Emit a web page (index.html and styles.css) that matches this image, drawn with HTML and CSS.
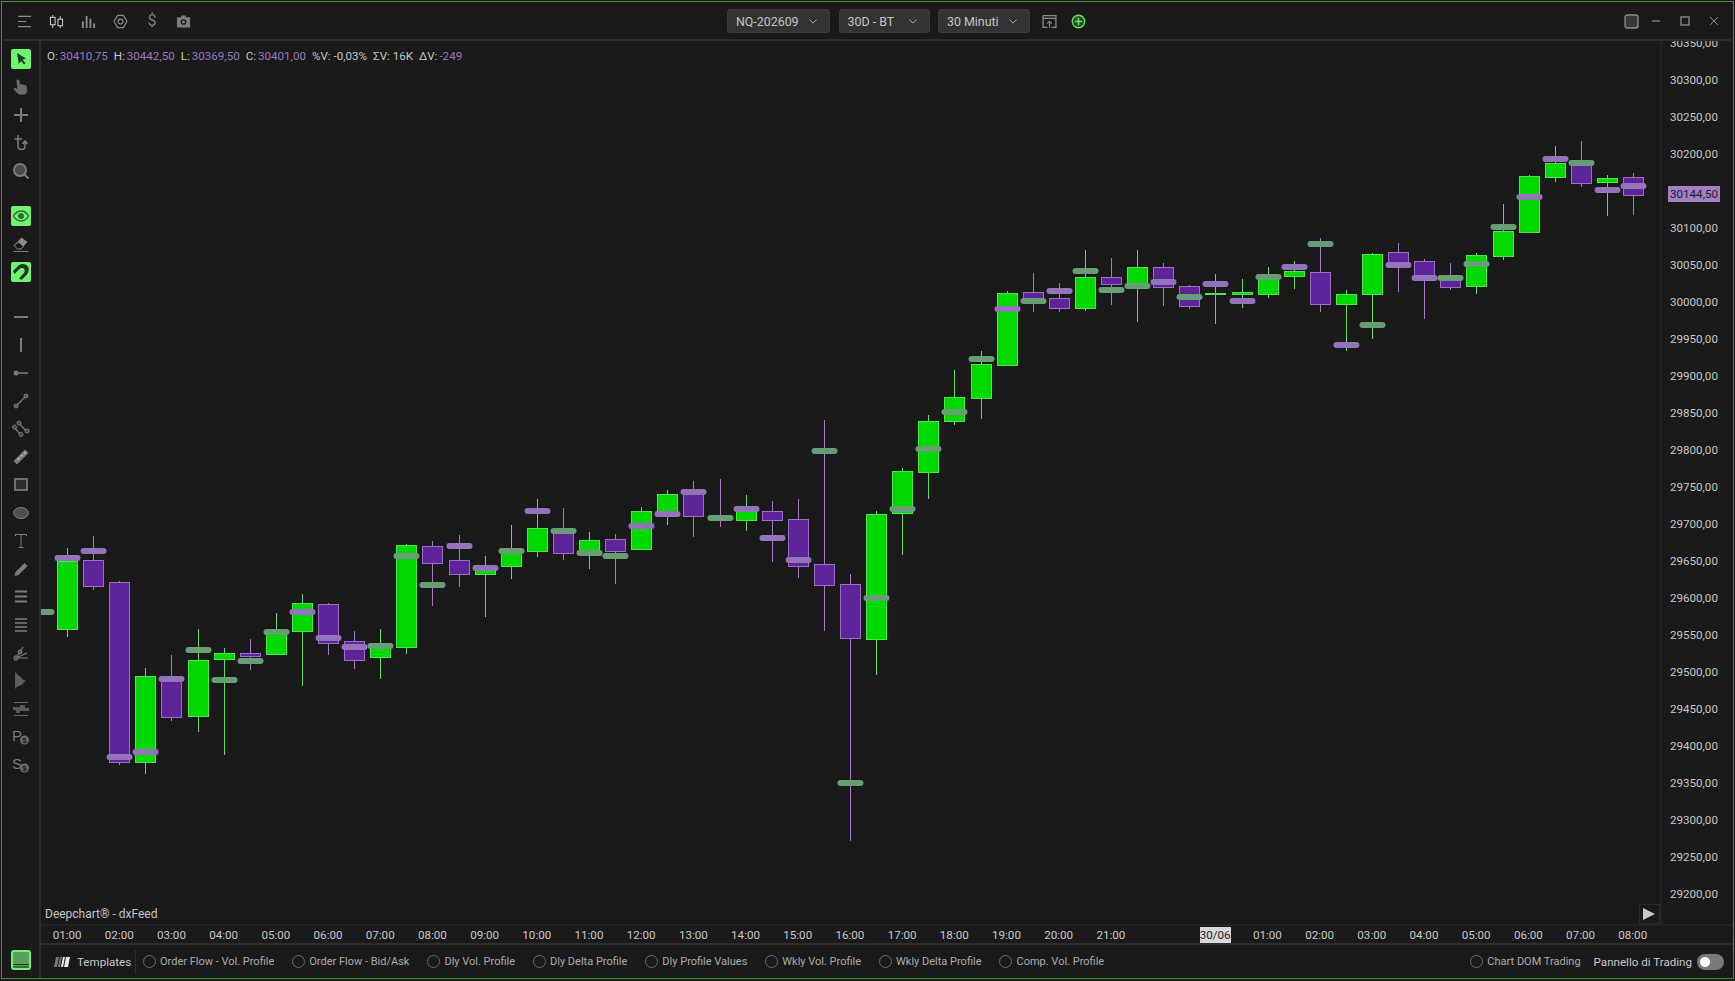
FILE: index.html
```html
<!DOCTYPE html>
<html lang="en">
<head>
    <meta charset="UTF-8">
    <title>Deepchart</title>
    <link rel="stylesheet" href="styles.css">
</head>
<body>
    <div class="window">
        <!-- Top bar -->
        <div class="topbar">
            <div class="top-icons">
                <svg class="top-icon" viewBox="0 0 16 16"><path d="M1 2.500h14M1 8h9M1 13.500h14" stroke="#8a8a8a" stroke-width="1.200" fill="none"/></svg>
                <svg class="top-icon" viewBox="0 0 16 16"><path d="M4 1v14M12 2v13" stroke="#ddd" stroke-width="1"/><rect x="1.500" y="3.500" width="5" height="8" fill="#1a1a1a" stroke="#ddd"/><rect x="9.500" y="5.500" width="5" height="7" fill="#1a1a1a" stroke="#ddd"/></svg>
                <svg class="top-icon" viewBox="0 0 16 16"><path d="M2 15V8M6 15V2M10 15V5M14 15V10" stroke="#8a8a8a" stroke-width="2" fill="none"/></svg>
                <svg class="top-icon" viewBox="0 0 16 16"><path d="M5 1.500h6L15 8l-4 6.500H5L1 8z" fill="none" stroke="#8a8a8a" stroke-width="1.200" stroke-linejoin="round"/><circle cx="8" cy="8" r="2.600" fill="none" stroke="#8a8a8a" stroke-width="1.200"/></svg>
                <span class="top-dollar">$</span>
                <svg class="top-icon" viewBox="0 0 16 16"><path d="M1 3.500h4L6 1.500h4l1 2h4v11H1z" fill="#7c7c7c"/><circle cx="8" cy="8.500" r="3" fill="#1a1a1a"/><circle cx="8" cy="8.500" r="1.600" fill="#7c7c7c"/></svg>
            </div>

            <div class="top-center">
                <div class="select select-symbol">NQ-202609 <svg viewBox="0 0 12 8"><path d="M1.500 1.500L6 6l4.500-4.500" fill="none" stroke="#b5b5b5" stroke-width="1.100"/></svg></div>
                <div class="select select-range">30D - BT <svg viewBox="0 0 12 8"><path d="M1.500 1.500L6 6l4.500-4.500" fill="none" stroke="#b5b5b5" stroke-width="1.100"/></svg></div>
                <div class="select select-period">30 Minuti <svg viewBox="0 0 12 8"><path d="M1.500 1.500L6 6l4.500-4.500" fill="none" stroke="#b5b5b5" stroke-width="1.100"/></svg></div>
                <svg class="top-icon layout-icon" viewBox="0 0 14 14"><path d="M1 1.500h12v11H9M5 12.500H1v-11M1 4h12" fill="none" stroke="#8a8a8a" stroke-width="1.200"/><path d="M7 13V7M4.800 9L7 6.800 9.200 9" fill="none" stroke="#8a8a8a"/></svg>
                <svg class="top-icon plus-icon" viewBox="0 0 14 14"><circle cx="7" cy="7" r="5.800" fill="#2c4a2c" stroke="#62e062" stroke-width="1.300"/><path d="M7 3.600v6.800M3.600 7h6.800" stroke="#62e062" stroke-width="1.400"/></svg>
            </div>

            <div class="top-right">
                <svg class="win-theme" viewBox="0 0 15 15"><rect x="1" y="1" width="13" height="13" rx="2.500" fill="#383838" stroke="#8a8a8a" stroke-width="1.400"/></svg>
                <svg class="win-btn" viewBox="0 0 10 10"><path d="M1 5h8" stroke="#8a8a8a" stroke-width="1.200"/></svg>
                <svg class="win-btn" viewBox="0 0 10 10"><rect x="1" y="1" width="8" height="8" fill="none" stroke="#9a9a9a" stroke-width="1.200"/></svg>
                <svg class="win-btn" viewBox="0 0 10 10"><path d="M1 1l8 8M9 1l-8 8" stroke="#8a8a8a" stroke-width="1"/></svg>
            </div>
        </div>

        <div class="main">
            <!-- Drawing tools -->
            <div class="toolbox">
                <div class="tool on"><svg viewBox="0 0 20 20"><path d="M6 4l9 5.500-3.500 1.300 3 3.500-1.500 1.300-3-3.500-2.200 3z" fill="#1e3a1e"/></svg></div>
                <div class="tool"><svg viewBox="0 0 20 20"><path d="M7 2.500c1 0 1.500.8 1.500 1.500l.5 3 5 1c1.500.5 2 1.500 2 3v3c0 2-1.500 3.500-3.500 3.500H9c-1.500 0-2.500-1-3.500-2L3 12.500c-.8-1 .5-2.300 1.500-1.500L6.500 12 5.500 4c0-1 .5-1.500 1.500-1.500z" fill="#6a6a6a"/></svg></div>
                <div class="tool"><svg viewBox="0 0 20 20"><path d="M10 3v14M3 10h14" stroke="#7c7c7c" stroke-width="2"/></svg></div>
                <div class="tool"><svg viewBox="0 0 20 20"><path d="M7 2v11c0 2 1.500 3.500 3.500 3.500S14 15 14 13V9M3.500 6H11M11.500 11L14 8l2.500 3" fill="none" stroke="#7c7c7c" stroke-width="1.500"/></svg></div>
                <div class="tool"><svg viewBox="0 0 20 20"><circle cx="9" cy="9" r="6" fill="#4a4a4a" stroke="#7c7c7c" stroke-width="2"/><path d="M13.500 13.500l4 4" stroke="#7c7c7c" stroke-width="2"/></svg></div>

                <div class="tool on tool-group"><svg viewBox="0 0 20 20"><path d="M2.500 10c2-3.500 4.500-5 7.500-5s5.500 1.500 7.500 5c-2 3.500-4.500 5-7.500 5s-5.500-1.500-7.500-5z" fill="none" stroke="#2e6e34" stroke-width="1.500"/><circle cx="10" cy="10" r="3" fill="#2e6e34"/></svg></div>
                <div class="tool"><svg viewBox="0 0 20 20"><path d="M3 11.500L10.500 3.500l6 4.500-6.500 7H6.500z" fill="#8a8a8a"/><path d="M3 11.500L6.500 15H10l2.500-2.700-5-4.300z" fill="#1a1a1a" stroke="#8a8a8a"/><path d="M2.500 17.500h15" stroke="#7c7c7c"/></svg></div>
                <div class="tool on"><svg viewBox="0 0 20 20"><path d="M3.500 12L8 7.500c2-2 4-1.800 5-.8s1.200 3-.8 5L8 16.500l2.500 1.500 5-5c3-3 3-7 .8-9.200S10 1 7 4L2 9z" fill="#1e3a1e"/></svg></div>

                <div class="tool tool-group"><svg viewBox="0 0 20 20"><rect x="3" y="9" width="14" height="2" fill="#7c7c7c"/></svg></div>
                <div class="tool"><svg viewBox="0 0 20 20"><rect x="9" y="3" width="2" height="14" fill="#7c7c7c"/></svg></div>
                <div class="tool"><svg viewBox="0 0 20 20"><circle cx="5" cy="10" r="2.500" fill="#7c7c7c"/><path d="M5 10h12" stroke="#7c7c7c" stroke-width="1.500"/></svg></div>
                <div class="tool"><svg viewBox="0 0 20 20"><path d="M5 15L15 5" stroke="#7c7c7c" stroke-width="1.200"/><circle cx="5" cy="15" r="2" fill="#555" stroke="#7c7c7c"/><circle cx="15" cy="5" r="2" fill="#555" stroke="#7c7c7c"/></svg></div>
                <div class="tool"><svg viewBox="0 0 20 20"><path d="M3 8l6 7M8 4l8 9" stroke="#7c7c7c" stroke-width="1.200"/><circle cx="3.500" cy="8" r="2" fill="#444" stroke="#7c7c7c"/><circle cx="8" cy="4" r="2" fill="#444" stroke="#7c7c7c"/><circle cx="10" cy="15.500" r="2" fill="#444" stroke="#7c7c7c"/><circle cx="16" cy="12" r="2" fill="#444" stroke="#7c7c7c"/></svg></div>
                <div class="tool"><svg viewBox="0 0 20 20"><path d="M2.500 14L14 2.500 17.500 6 6 17.500z" fill="#7c7c7c"/><path d="M7 12.500l1.500-1.500M10 9.500L11.500 8M13 6.500l1.500-1.500" stroke="#c0c0c0" stroke-width="1.500"/></svg></div>
                <div class="tool"><svg viewBox="0 0 20 20"><rect x="4" y="4" width="12" height="11" fill="#2c2c2c" stroke="#6e6e6e" stroke-width="2"/></svg></div>
                <div class="tool"><svg viewBox="0 0 20 20"><ellipse cx="10" cy="10" rx="7.500" ry="5.500" fill="#505050" stroke="#7c7c7c"/></svg></div>
                <div class="tool"><svg viewBox="0 0 20 20"><path d="M4 3.500h12M10 3.500v13M7.500 16.500h5M4.500 3v2M15.500 3v2" stroke="#7c7c7c" stroke-width="1" fill="none"/></svg></div>
                <div class="tool"><svg viewBox="0 0 20 20"><path d="M3.500 17l1-4L13.500 4l3 3-9 9z" fill="#7c7c7c"/></svg></div>
                <div class="tool"><svg viewBox="0 0 20 20"><path d="M4 4.500h12M4 9.500h12M4 14.500h12" stroke="#7c7c7c" stroke-width="2"/></svg></div>
                <div class="tool"><svg viewBox="0 0 20 20"><path d="M4 4h12M4 8h12M4 12h12M4 16h12" stroke="#7c7c7c" stroke-width="1.500"/></svg></div>
                <div class="tool"><svg viewBox="0 0 20 20"><path d="M5 15L12 4M5 15l11-5M5 15h12" stroke="#7c7c7c" stroke-width="1.200" fill="none"/><circle cx="5" cy="15" r="2.200" fill="#555" stroke="#7c7c7c"/><circle cx="9" cy="9" r="2" fill="#555" stroke="#7c7c7c"/></svg></div>
                <div class="tool"><svg viewBox="0 0 20 20"><path d="M4 1l2 2 2 2 2 1 1 2 2 1 2 1-2 1-1 2-2 1-2 1-2 1-2 2z" fill="#5e5e5e"/></svg></div>
                <div class="tool"><svg viewBox="0 0 20 20"><path d="M3 3.500h14M3 16.500h14" stroke="#666"/><path d="M2 8h7V6h5v3h4v3H9v2H5v-3H2z" fill="#5a5a5a"/></svg></div>
                <div class="tool"><svg viewBox="0 0 20 20"><text x="1" y="14" class="tool-letter">P</text><circle cx="13.500" cy="13" r="4.500" fill="#6a6a6a"/><text x="13.500" y="16" class="tool-coin">$</text></svg></div>
                <div class="tool"><svg viewBox="0 0 20 20"><text x="1" y="14" class="tool-letter">S</text><circle cx="13.500" cy="13" r="4.500" fill="#6a6a6a"/><text x="13.500" y="16" class="tool-coin">$</text></svg></div>

                <div class="tool-screen"><svg viewBox="0 0 20 20"><rect x="1" y="1" width="18" height="18" rx="2" fill="#5aa05c" stroke="#6ff56f" stroke-width="2"/><path d="M2 14.500h16M2 17h16" stroke="#1e3a1e"/></svg></div>
            </div>

            <div class="content">
                <div class="chart-row">
                    <div class="chart" id="chart">
                        <svg id="candles"></svg>
                        <div class="legend">
                            <span>O:<b>30410,75</b></span>
                            <span>H:<b>30442,50</b></span>
                            <span>L:<b>30369,50</b></span>
                            <span>C:<b>30401,00</b></span>
                            <span>%V: -0,03%</span>
                            <span>&Sigma;V: 16K</span>
                            <span>&Delta;V:<b>-249</b></span>
                        </div>
                        <div class="chart-name">Deepchart&reg; - dxFeed</div>
                        <div class="play"><svg viewBox="0 0 12 12"><path d="M0 0l12 6-12 6z" fill="#c8c8c8"/></svg></div>
                    </div>
                    <div class="price-axis">
                        <div class="price-list" id="prices"></div>
                        <div class="last-price">30144,50</div>
                    </div>
                </div>

                <div class="time-axis" id="times"></div>

                <!-- Templates bar -->
                <div class="bottombar">
                    <svg class="tmpl-icon" viewBox="0 0 18 12"><path d="M3 1h3L4 11H1zM7 1h2L7 11H5z" fill="#777"/><path d="M10 1h2l-2 10H8zM13 1h4l-2 10h-4z" fill="#e8e8e8"/></svg>
                    <span class="tmpl-label">Templates</span>
                    <div class="radio-list">
                        <label class="radio"><i></i>Order Flow - Vol. Profile</label>
                        <label class="radio"><i></i>Order Flow - Bid/Ask</label>
                        <label class="radio"><i></i>Dly Vol. Profile</label>
                        <label class="radio"><i></i>Dly Delta Profile</label>
                        <label class="radio"><i></i>Dly Profile Values</label>
                        <label class="radio"><i></i>Wkly Vol. Profile</label>
                        <label class="radio"><i></i>Wkly Delta Profile</label>
                        <label class="radio"><i></i>Comp. Vol. Profile</label>
                    </div>
                    <div class="bottom-right">
                        <label class="radio"><i></i>Chart DOM Trading</label>
                        <span class="panel-label">Pannello di Trading</span>
                        <div class="toggle"></div>
                    </div>
                </div>
            </div>
        </div>
    </div>

    <script src="script.js"></script>
</body>
</html>
```

FILE: styles.css
```css
* {
    box-sizing: border-box;
}

html, body {
    margin: 0;
    height: 100%;
    overflow: hidden;
    background-color: #1a1a1a;
}

body {
    padding: 1px 1px 2px;
    font-family: Roboto, "Open Sans", Arial, sans-serif;
    font-size: 11.6px;
    color: #c8c8c8;
}

.window {
    height: 100%;
    display: flex;
    flex-direction: column;
    border: 1px solid #4b8a3c;
    background-color: #1a1a1a;
}

/* Top bar */
.topbar {
    height: 39px;
    flex: none;
    display: flex;
    align-items: center;
    margin: 0 2px;
    padding-top: 1px;
    border-bottom: 2px solid #2d2d2d;
}

.top-icons {
    display: flex;
    align-items: center;
    gap: 17px;
    padding-left: 13px;
}

.top-icon {
    width: 15px;
    height: 15px;
    flex: none;
}

.top-dollar {
    width: 14px;
    text-align: center;
    font-size: 16px;
    line-height: 16px;
    color: #7c7c7c;
}

.top-center {
    display: flex;
    align-items: center;
    margin-left: 536px;
}

.select {
    height: 24px;
    display: flex;
    align-items: center;
    justify-content: space-between;
    padding: 0 11px 0 8px;
    margin-right: 8.5px;
    background-color: #333;
    border: 1px solid #3a3a3a;
    border-radius: 3px;
    font-size: 12.4px;
    color: #c4c4c4;
}

.select svg {
    width: 10px;
    height: 7px;
}

.select-symbol {
    width: 103px;
}

.select-range {
    width: 91px;
}

.select-period {
    width: 92px;
}

.layout-icon {
    margin-left: 3px;
}

.plus-icon {
    margin-left: 14px;
}

.top-right {
    display: flex;
    align-items: center;
    margin-left: auto;
    padding-right: 12px;
    gap: 19px;
}

.win-theme {
    width: 15px;
    height: 15px;
    margin-right: -7px;
}

.win-btn {
    width: 10px;
    height: 10px;
}

/* Left tools */
.main {
    flex: 1;
    display: flex;
    min-height: 0;
}

.toolbox {
    width: 39px;
    flex: none;
    display: flex;
    flex-direction: column;
    align-items: center;
    gap: 8px;
    padding: 8px 0 8px 1px;
    border-right: 2px solid #2d2d2d;
}

.tool {
    width: 20px;
    height: 20px;
    flex: none;
    border-radius: 2px;
}

.tool svg {
    display: block;
    width: 20px;
    height: 20px;
}

.tool.on {
    background-color: #70f570;
}

.tool-group {
    margin-top: 17px;
}

.tool-letter {
    font-family: "Liberation Sans", sans-serif;
    font-size: 15px;
    font-weight: 300;
    fill: #7c7c7c;
}

.tool-coin {
    font-family: "Liberation Sans", sans-serif;
    font-size: 8px;
    font-weight: bold;
    text-anchor: middle;
    fill: #1a1a1a;
}

.tool-screen {
    width: 20px;
    height: 20px;
    margin-top: auto;
}

.tool-screen svg {
    display: block;
    width: 20px;
    height: 20px;
}

/* Chart */
.content {
    flex: 1;
    min-width: 0;
    display: flex;
    flex-direction: column;
}

.chart-row {
    flex: 1;
    min-height: 0;
    display: flex;
}

.chart {
    flex: 1;
    position: relative;
    overflow: hidden;
}

#candles {
    display: block;
    width: 100%;
    height: 100%;
}

.legend {
    position: absolute;
    left: 6px;
    top: 7px;
    display: flex;
    gap: 6px;
    line-height: 16px;
    color: #c4c4c4;
}

.legend b {
    margin-left: 2px;
    font-weight: normal;
    color: #9678c0;
}

.chart-name {
    position: absolute;
    left: 4px;
    bottom: 2px;
    font-size: 12px;
    line-height: 16px;
    color: #c4c4c4;
}

.play {
    position: absolute;
    right: 0;
    bottom: 0;
    width: 21px;
    height: 20px;
    padding: 3px 3px;
    border: 1px solid #2a2a2a;
}

.play svg {
    display: block;
    width: 12px;
    height: 12px;
}

.price-axis {
    width: 73px;
    flex: none;
    position: relative;
    overflow: hidden;
    border-left: 2px solid #232323;
}

.price-list {
    margin-top: -16.5px;
    padding-left: 8px;
}

.price-row {
    height: 37px;
    line-height: 37px;
}

.last-price {
    position: absolute;
    left: 6px;
    top: 145px;
    width: 52px;
    height: 16px;
    line-height: 16px;
    text-align: center;
    background-color: #a27fc6;
    color: #1e1e1e;
}

/* Time axis */
.time-axis {
    height: 19px;
    flex: none;
    display: flex;
    align-items: center;
    padding-top: 1px;
    border-top: 2px solid #232323;
}

.tick {
    width: 52.2px;
    flex: none;
    text-align: center;
}

.tick.date span {
    display: inline-block;
    line-height: 16px;
    background-color: #d8d8d8;
    color: #222;
}

/* Bottom bar */
.bottombar {
    height: 35px;
    flex: none;
    display: flex;
    align-items: center;
    padding-left: 12px;
    padding-right: 9px;
    border-top: 2px solid #2d2d2d;
}

.tmpl-icon {
    width: 18px;
    height: 12px;
    flex: none;
}

.tmpl-label {
    width: 59px;
    height: 24px;
    margin-left: 6px;
    flex: none;
    border-right: 1px solid #2d2d2d;
    line-height: 24px;
}

.radio-list {
    display: flex;
    gap: 18px;
    padding-left: 7px;
}

.radio {
    display: flex;
    align-items: center;
    gap: 4px;
    font-size: 11px;
    color: #aaa;
}

.radio i {
    width: 13px;
    height: 13px;
    flex: none;
    border: 1px solid #6a6a6a;
    border-radius: 50%;
}

.bottom-right {
    display: flex;
    align-items: center;
    margin-left: auto;
}

.panel-label {
    margin-left: 13px;
}

.toggle {
    width: 27px;
    height: 16px;
    margin-left: 5px;
    position: relative;
    border-radius: 8px;
    background-color: #7a7a7a;
}

.toggle::after {
    content: "";
    position: absolute;
    left: 3px;
    top: 3px;
    width: 10px;
    height: 10px;
    border-radius: 50%;
    background-color: #fff;
}
```

FILE: script.js
```js
// candle values are in page pixels: dir, high, body top, body bottom, low, marker y, marker colour
var candles = [
    ["d", 612, 612, 612, 612, 612, "g"],
    ["u", 548, 561, 629, 637, 558, "p"],
    ["d", 536, 560, 586, 590, 551, "p"],
    ["d", 581, 582, 762, 765, 757, "p"],
    ["u", 668, 676, 762, 774, 752, "p"],
    ["d", 655, 678, 717, 721, 679, "p"],
    ["u", 629, 660, 716, 732, 650, "g"],
    ["u", 648, 653, 659, 755, 680, "g"],
    ["d", 639, 653, 656, 670, 661, "g"],
    ["u", 613, 632, 654, 654, 632, "g"],
    ["u", 594, 603, 631, 686, 612, "p"],
    ["d", 603, 604, 643, 655, 638, "p"],
    ["d", 631, 641, 660, 669, 647, "p"],
    ["u", 629, 645, 657, 679, 646, "g"],
    ["u", 544, 545, 647, 654, 556, "g"],
    ["d", 541, 546, 563, 606, 585, "g"],
    ["d", 535, 560, 574, 587, 546, "p"],
    ["u", 556, 568, 574, 617, 568, "p"],
    ["u", 525, 551, 566, 579, 551, "g"],
    ["u", 499, 528, 551, 557, 511, "p"],
    ["d", 508, 531, 553, 560, 531, "g"],
    ["u", 532, 540, 553, 569, 553, "g"],
    ["d", 534, 539, 551, 584, 556, "g"],
    ["u", 507, 511, 549, 549, 526, "p"],
    ["u", 490, 494, 514, 525, 514, "p"],
    ["d", 481, 492, 516, 537, 492, "p"],
    ["d", 479, 518, 518, 527, 518, "g"],
    ["u", 495, 509, 520, 531, 509, "p"],
    ["d", 501, 511, 520, 562, 538, "p"],
    ["d", 499, 519, 566, 578, 560, "p"],
    ["d", 420, 564, 585, 631, 451, "g"],
    ["d", 574, 584, 638, 841, 783, "g"],
    ["u", 511, 514, 639, 675, 598, "g"],
    ["u", 468, 471, 513, 555, 509, "g"],
    ["u", 415, 421, 472, 499, 449, "g"],
    ["u", 370, 397, 421, 425, 412, "g"],
    ["u", 351, 364, 398, 419, 359, "g"],
    ["u", 291, 293, 365, 365, 309, "p"],
    ["d", 273, 292, 303, 312, 301, "g"],
    ["d", 283, 298, 308, 312, 291, "p"],
    ["u", 250, 277, 308, 311, 271, "g"],
    ["d", 258, 277, 284, 305, 290, "g"],
    ["u", 250, 267, 283, 322, 286, "g"],
    ["d", 263, 267, 287, 306, 282, "p"],
    ["d", 285, 286, 306, 309, 297, "g"],
    ["u", 274, 293, 294, 324, 284, "p"],
    ["u", 279, 292, 294, 308, 301, "p"],
    ["u", 267, 277, 294, 298, 277, "g"],
    ["u", 261, 271, 276, 289, 267, "p"],
    ["d", 238, 272, 304, 312, 244, "g"],
    ["u", 290, 294, 304, 351, 345, "p"],
    ["u", 253, 254, 294, 339, 325, "g"],
    ["d", 243, 252, 267, 292, 265, "p"],
    ["d", 259, 261, 278, 319, 278, "p"],
    ["d", 263, 277, 287, 290, 278, "g"],
    ["u", 253, 255, 286, 294, 264, "g"],
    ["u", 204, 231, 256, 260, 227, "g"],
    ["u", 175, 176, 232, 232, 197, "p"],
    ["u", 146, 163, 177, 182, 159, "p"],
    ["d", 141, 163, 183, 187, 163, "g"],
    ["u", 175, 178, 182, 216, 190, "p"],
    ["d", 173, 177, 195, 215, 186, "p"]
];

var SVG_NS = "http://www.w3.org/2000/svg";
var STEP = 26.1;
var FIRST_X = 41.4;

var svg = document.getElementById("candles");
var box = document.getElementById("chart").getBoundingClientRect();
svg.setAttribute("viewBox", box.left + " " + box.top + " " + box.width + " " + box.height);
svg.setAttribute("shape-rendering", "crispEdges");

function addRect(x, y, w, h, fill, stroke, rx) {
    var r = document.createElementNS(SVG_NS, "rect");
    r.setAttribute("x", x);
    r.setAttribute("y", y);
    r.setAttribute("width", w);
    r.setAttribute("height", h);
    r.setAttribute("fill", fill);
    if (stroke) r.setAttribute("stroke", stroke);
    if (rx) {
        r.setAttribute("rx", rx);
        r.setAttribute("shape-rendering", "auto");
    }
    svg.appendChild(r);
}

candles.forEach(function (c, i) {
    var x = Math.floor(FIRST_X + STEP * i);
    var up = c[0] === "u";
    addRect(x, c[1], 1, c[4] - c[1], up ? "#5fdc5f" : "#a878c8");
    if (c[3] > c[2]) {
        addRect(x - 9.5, c[2] + 0.5, 20, c[3] - c[2], up ? "#00d900" : "#60249a", up ? "#4ce64c" : "#9b6dc4");
    }
});

// markers go last so they stay above neighbouring bodies
candles.forEach(function (c, i) {
    var x = Math.floor(FIRST_X + STEP * i);
    addRect(x - 12.5, c[5] - 3, 26, 6, c[6] === "p" ? "#9473bd" : "#689e74", null, 3);
});

// price axis, the 30150 row stays empty because the last price tag sits there
var prices = document.getElementById("prices");
for (var p = 30350; p >= 29200; p -= 50) {
    var row = document.createElement("div");
    row.className = "price-row";
    if (p !== 30150) row.textContent = p + ",00";
    prices.appendChild(row);
}

// time axis, one slot per hour, 22:00-00:00 has no label
var labels = ["01:00", "02:00", "03:00", "04:00", "05:00", "06:00", "07:00", "08:00", "09:00", "10:00", "11:00",
    "12:00", "13:00", "14:00", "15:00", "16:00", "17:00", "18:00", "19:00", "20:00", "21:00", "", "30/06",
    "01:00", "02:00", "03:00", "04:00", "05:00", "06:00", "07:00", "08:00"];
var times = document.getElementById("times");
labels.forEach(function (t) {
    var tick = document.createElement("div");
    tick.className = t === "30/06" ? "tick date" : "tick";
    var s = document.createElement("span");
    s.textContent = t;
    tick.appendChild(s);
    times.appendChild(tick);
});
```
